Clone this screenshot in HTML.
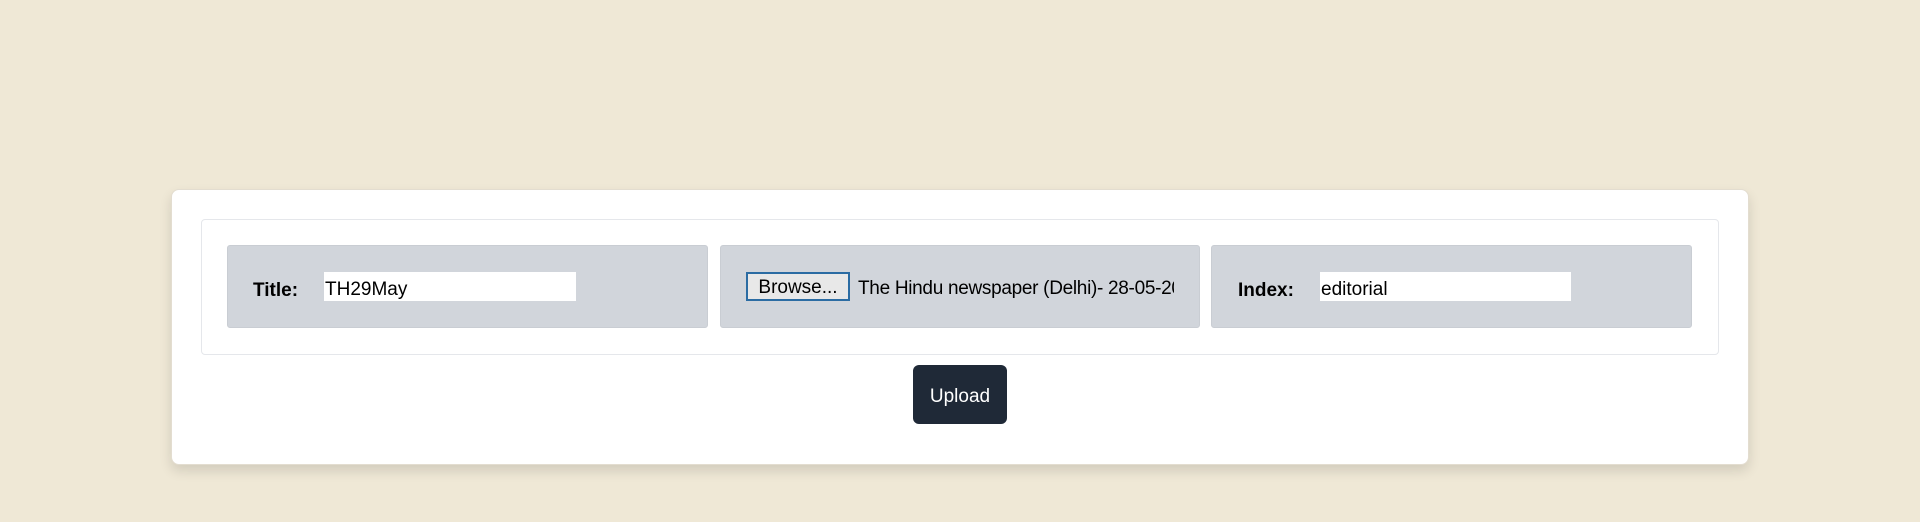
<!DOCTYPE html>
<html><head><style>
body{margin:0;width:1920px;height:522px;background:#efe8d6;font-family:"Liberation Sans",sans-serif;position:relative;overflow:hidden}
.card{position:absolute;left:171px;top:189px;width:1578px;height:276px;background:#fff;border-radius:8px;box-shadow:0 6px 12px rgba(0,0,0,0.12);border:1px solid #e3ddd0;box-sizing:border-box}
.inner{position:absolute;left:201px;top:219px;width:1518px;height:136px;border:1px solid #e5e7eb;border-radius:4px;box-sizing:border-box}
.p{position:absolute;top:245px;height:83px;background:#d1d5db;border-radius:3px;border:1px solid #c9cdd3;box-sizing:border-box}
.lbl{position:absolute;top:280px;font-weight:bold;font-size:19px;color:#000}
.in{position:absolute;top:272px;height:29px;background:#fff;font-size:19px;line-height:35px;color:#000;padding-left:1px;box-sizing:border-box;overflow:hidden}
.br{position:absolute;left:746px;top:272px;width:104px;height:29px;border:2px solid #2b6ca3;background:#e8e8e8;box-sizing:border-box;font-size:19px;line-height:27px;text-align:center}
.fn{position:absolute;left:858px;top:274px;width:316px;overflow:hidden;white-space:nowrap;font-size:19px;line-height:29px;letter-spacing:-0.3px}
.up{position:absolute;left:913px;top:365px;width:94px;height:59px;background:#1f2937;border-radius:6px;color:#fff;font-size:19px;line-height:64px;text-align:center}
</style></head><body>
<div class="card"></div>
<div class="inner"></div>
<div class="p" style="left:227px;width:481px"></div>
<div class="p" style="left:720px;width:480px"></div>
<div class="p" style="left:1211px;width:481px"></div>
<div class="lbl" style="left:253px">Title:</div>
<div class="in" style="left:324px;width:252px">TH29May</div>
<div class="br">Browse...</div>
<div class="fn">The Hindu newspaper (Delhi)- 28-05-2023</div>
<div class="lbl" style="left:1238px">Index:</div>
<div class="in" style="left:1320px;width:251px">editorial</div>
<div class="up">Upload</div>
</body></html>
